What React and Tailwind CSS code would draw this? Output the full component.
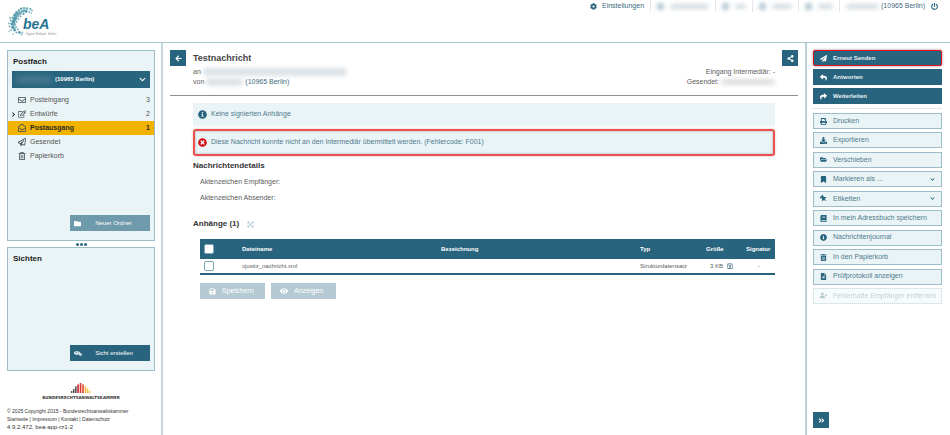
import { useState } from 'react';
import {
  FaCog, FaPowerOff, FaRegEnvelope, FaRegEdit, FaRegEnvelopeOpen, FaRegPaperPlane, FaRegTrashAlt,
  FaFolder, FaFolderOpen, FaEye, FaArrowLeft, FaShareAlt, FaInfoCircle, FaTimesCircle, FaRegSave,
  FaSave, FaPaperPlane, FaReply, FaShare, FaPrint, FaDownload, FaBookmark, FaThumbtack, FaBook,
  FaTrashAlt, FaFileAlt, FaUserTimes, FaAngleDoubleRight, FaChevronDown, FaChevronRight,
  FaExpandArrowsAlt,
} from 'react-icons/fa';

const folders = [
  { name: 'Posteingang', icon: FaRegEnvelope, count: 3 },
  { name: 'Entwürfe', icon: FaRegEdit, count: 2, expandable: true },
  { name: 'Postausgang', icon: FaRegEnvelopeOpen, count: 1 },
  { name: 'Gesendet', icon: FaRegPaperPlane },
  { name: 'Papierkorb', icon: FaRegTrashAlt },
];

const mainActions = [
  { label: 'Erneut Senden', icon: FaPaperPlane, marked: true },
  { label: 'Antworten', icon: FaReply },
  { label: 'Weiterleiten', icon: FaShare },
];

const actions = [
  { label: 'Drucken', icon: FaPrint },
  { label: 'Exportieren', icon: FaDownload },
  { label: 'Verschieben', icon: FaFolderOpen },
  { label: 'Markieren als ...', icon: FaBookmark, menu: true },
  { label: 'Etiketten', icon: FaThumbtack, menu: true, tilted: true },
  { label: 'In mein Adressbuch speichern', icon: FaBook },
  { label: 'Nachrichtenjournal', icon: FaInfoCircle },
  { label: 'In den Papierkorb', icon: FaTrashAlt },
  { label: 'Prüfprotokoll anzeigen', icon: FaFileAlt },
  { label: 'Fehlerhafte Empfänger entfernen', icon: FaUserTimes, disabled: true },
];

// widths of the redacted entries in the top bar
const hiddenLinks = ['w-[39px]', 'w-[11px]', 'w-[20px]', 'w-[15px]'];

// dots of the swirl, [x, y, radius]
const dots = [
  [14, 1.6, 1.1], [17, 1.2, 1.3], [20, 1.6, 1.3], [23.4, 2, 1], [12, 3.6, 1.4], [15.5, 4, 1.6], [19, 4.2, 1.5],
  [22.4, 5, 1], [24.4, 6.2, 0.8], [9.5, 5.6, 1.4], [12.8, 6.8, 1.7], [16.4, 6.8, 1.2], [7.6, 8, 1.4], [10.4, 9, 1.6],
  [13.6, 9.6, 1], [25, 3.6, 0.8], [3, 11, 0.9], [5.8, 10.8, 1.3], [8.4, 11.8, 1.5], [11.4, 12, 1],
  [3.8, 13.6, 1.1], [6.6, 14.4, 1.5], [9.6, 14.8, 1], [2, 16.4, 0.9], [4.8, 17, 1.4], [7.8, 17.6, 1.3],
  [2.6, 19.6, 1], [5.8, 20.2, 1.5], [9, 20.2, 1], [4.2, 23.2, 0.9], [7.6, 23, 1.4], [10.8, 22.6, 1],
  [9.4, 25.6, 1], [12.4, 25.4, 1.3], [15.4, 25.4, 0.9], [14.6, 27.4, 0.9], [6, 27, 0.7], [2.2, 24.2, 0.7],
];

function Logo() {
  return (
    <svg className="h-[29px] w-[50px]" viewBox="0 0 50 29" role="img" aria-label="beA Digital. Einfach. Sicher.">
      <path d="M13 5C7 9 4 15 7 22M18 3C11 6 8 10 7 17" fill="none" stroke="#6ba6b6" strokeWidth="1.6" />
      {dots.map(([x, y, r], i) => (
        <circle key={i} cx={x} cy={y} r={r} fill={i % 3 === 0 ? '#4f98ab' : '#74adbb'} />
      ))}
      <text x="16" y="22" fontSize="14" fontWeight="bold" fontStyle="italic" fontFamily="Liberation Sans, Arial, sans-serif" fill="#23738f">beA</text>
      <text x="19" y="28" fontSize="3" fontStyle="italic" fontFamily="Liberation Sans, Arial, sans-serif" fill="#7f8f96">Digital. Einfach. Sicher.</text>
    </svg>
  );
}

function ChamberLogo() {
  return (
    <svg className="h-[10px] w-[20px]" viewBox="0 0 20 10" aria-hidden="true">
      <rect x="0" y="8" width="1.4" height="2" fill="#555" />
      <rect x="2" y="6" width="1.4" height="4" fill="#444" />
      <rect x="4" y="3.4" width="1.6" height="6.6" fill="#555" />
      <rect x="6.2" y="1.4" width="1.7" height="8.6" fill="#c8343a" />
      <rect x="8.7" y="0" width="1.7" height="10" fill="#dc3c38" />
      <rect x="11.2" y="1.4" width="1.7" height="8.6" fill="#e2553c" />
      <rect x="13.7" y="3.4" width="1.6" height="6.6" fill="#f2b63c" />
      <rect x="16" y="5.4" width="1.4" height="4.6" fill="#f4c64a" />
      <rect x="18.2" y="8" width="1.4" height="2" fill="#f4c64a" />
    </svg>
  );
}

function Blurred({ className }) {
  return <span className={`inline-block rounded-sm blur-[2px] ${className}`} />;
}

function TopBar() {
  return (
    <header className="flex h-[43px] shrink-0 items-start justify-between border-b border-[#a9c5d1] pl-[7px] pr-3">
      <div className="pt-[7px]">
        <Logo />
      </div>
      <nav className="flex h-3 items-center text-[7px] text-[#3d6b80]">
        <a href="#" className="flex items-center gap-[5px] pr-[6px]">
          <FaCog className="size-[7px] text-[#28647e]" />
          Einstellungen
        </a>
        {hiddenLinks.map((width) => (
          <a key={width} href="#" className="flex h-3 items-center gap-[6px] border-l border-gray-200 px-[6px]">
            <Blurred className="size-[7px] bg-[#a9c2cd]" />
            <Blurred className={`h-[5px] bg-[#d3dde2] ${width}`} />
          </a>
        ))}
        <span className="flex h-3 items-center gap-[2px] border-l border-gray-200 pl-[6px]">
          <Blurred className="h-[5px] w-[33px] bg-[#d3dde2]" />
          (10965 Berlin)
        </span>
        <button aria-label="Abmelden" className="pl-[6px] text-[#28647e]">
          <FaPowerOff className="size-[7px]" />
        </button>
      </nav>
    </header>
  );
}

function Sidebar() {
  const [selected, setSelected] = useState('Postausgang');

  return (
    <aside className="flex w-[163px] shrink-0 flex-col border-r-2 border-[#c3d8e0] pl-[7px] pr-[6px] pt-[7px]">
      {/* Folders */}
      <section className="flex min-h-[191px] flex-col border border-[#9dbdc9] bg-[#eaf4f7]">
        <h2 className="px-[5px] pt-[5px] text-[8px] leading-3 font-bold">Postfach</h2>
        <div className="relative mx-1 mt-[3px]">
          <select
            aria-label="Postfach"
            className="block h-[17px] w-full appearance-none bg-[#28647e] pl-[43px] text-[6px] font-bold text-white"
          >
            <option>(10965 Berlin)</option>
          </select>
          <span className="pointer-events-none absolute top-[5px] left-1 h-[7px] w-[35px] bg-[#4b7d91] blur-[3px]" />
          <FaChevronDown className="pointer-events-none absolute top-[5px] right-1 size-[7px] text-white" />
        </div>

        <ul className="mt-[5px] text-[7px] text-[#555]">
          {folders.map(({ name, icon: Icon, count, expandable }) => (
            <li key={name}>
              <button
                onClick={() => setSelected(name)}
                className={`flex h-[14px] w-full items-center pr-1 ${selected === name ? 'bg-[#f2b200] font-bold text-[#2a2a20]' : ''}`}
              >
                <span className="flex w-[10px] justify-center">
                  {expandable && <FaChevronRight className="size-[5px] text-black" />}
                </span>
                <Icon className="mr-1 size-[8px] text-[#3a4a52]" />
                {name}
                <span className="ml-auto">{count}</span>
              </button>
            </li>
          ))}
        </ul>

        <button className="mt-auto mr-1 mb-[9px] flex h-4 w-[80px] items-center self-end bg-[#6e9aab] text-[6px] text-white">
          <FaFolder className="ml-1 size-[7px] text-white" />
          <span className="flex-1 pr-1 text-center">Neuer Ordner</span>
        </button>
      </section>

      <div className="flex h-[6px] items-center justify-center gap-px">
        <span className="size-[3px] rounded-full bg-[#28647e]" />
        <span className="size-[3px] rounded-full bg-[#28647e]" />
        <span className="size-[3px] rounded-full bg-[#28647e]" />
      </div>

      {/* Views */}
      <section className="flex min-h-[124px] flex-col border border-[#9dbdc9] bg-[#eaf4f7]">
        <h2 className="px-[5px] pt-[5px] text-[8px] leading-3 font-bold">Sichten</h2>
        <button className="mt-auto mr-1 mb-[9px] flex h-4 w-[80px] items-center self-end bg-[#28647e] text-[6px] text-white">
          <span className="ml-1 flex items-end">
            <FaEye className="size-[6px]" />
            <FaCog className="-ml-px size-[3px]" />
          </span>
          <span className="flex-1 pr-1 text-center">Sicht erstellen</span>
        </button>
      </section>

      <footer className="pt-3 text-[5px] leading-[8px] text-[#333]">
        <div className="flex flex-col items-center gap-[2px]">
          <ChamberLogo />
          <p className="font-['DejaVu_Sans',sans-serif] text-[4px] leading-[6px] font-bold">BUNDESRECHTSANWALTSKAMMER</p>
        </div>
        <p className="mt-[6px]">© 2025 Copyright 2015 - Bundesrechtsanwaltskammer</p>
        <p>
          <a href="#">Startseite</a> | <a href="#">Impressum</a> | <a href="#">Kontakt</a> | <a href="#">Datenschutz</a>
        </p>
        <p className="text-[6px] leading-[8px]">4.9.2.472, bea-app-rz1-2</p>
      </footer>
    </aside>
  );
}

function Attachments() {
  const [checked, setChecked] = useState(false);
  const box = 'block size-[10px] appearance-none rounded-[2px] border border-[#7fa6b5] bg-white checked:bg-[#a9c5d1]';

  return (
    <section className="pt-3">
      <h3 className="flex items-center gap-2 text-[8px] leading-3 font-bold text-[#333]">
        Anhänge (1)
        <FaExpandArrowsAlt className="size-[7px] text-[#a9cbd6]" />
      </h3>
      <div className="pl-[7px]">
        <table className="mt-[9px] w-full table-fixed border-b-2 border-[#28647e] text-left text-[6px]">
          <colgroup>
            <col className="w-[42px]" />
            <col />
            <col />
            <col className="w-[66px]" />
            <col className="w-[40px]" />
            <col className="w-[29px]" />
          </colgroup>
          <thead className="bg-[#28647e] text-white">
            <tr className="h-5">
              <th className="pl-1">
                <input type="checkbox" aria-label="Alle auswählen" className={box} checked={checked} onChange={() => setChecked(!checked)} />
              </th>
              <th>Dateiname</th>
              <th>Bezeichnung</th>
              <th>Typ</th>
              <th>Größe</th>
              <th>Signatur</th>
            </tr>
          </thead>
          <tbody>
            <tr className="h-[15px]">
              <td className="pl-1">
                <input type="checkbox" aria-label="xjustiz_nachricht.xml" className={box} checked={checked} onChange={() => setChecked(!checked)} />
              </td>
              <td>xjustiz_nachricht.xml</td>
              <td />
              <td>Strukturdatensatz</td>
              <td>
                <span className="flex items-center gap-1 pl-1">
                  3 KB
                  <FaRegSave className="size-[6px] text-[#3d6b80]" />
                </span>
              </td>
              <td className="pl-3">-</td>
            </tr>
          </tbody>
        </table>
        <div className="mt-2 flex gap-[6px] text-[7px] text-white">
          <button disabled className="flex h-4 w-[65px] items-center gap-[6px] bg-[#b5cad3] pl-[9px]">
            <FaSave className="size-[7px]" />
            Speichern
          </button>
          <button disabled className="flex h-4 w-[65px] items-center gap-[6px] bg-[#b5cad3] pl-[9px]">
            <FaEye className="size-[8px]" />
            Anzeigen
          </button>
        </div>
      </div>
    </section>
  );
}

function Message() {
  return (
    <main className="min-w-0 flex-1 px-[7px] pt-[7px] text-[7px] text-[#5c5c5c]">
      <div className="flex items-start border-b border-[#8f8f8f] pb-2">
        <button aria-label="Zurück" className="flex size-4 items-center justify-center bg-[#28647e] text-white">
          <FaArrowLeft className="size-[7px]" />
        </button>
        <div className="ml-[7px] leading-[10px]">
          <h1 className="text-[9px] leading-4 font-bold text-[#444]">Testnachricht</h1>
          <p className="mt-px flex items-center gap-[2px]">
            an <Blurred className="h-[8px] w-[144px] bg-[#dde3e6]" />
          </p>
          <p className="flex items-center gap-[2px]">
            von <Blurred className="h-[8px] w-[37px] bg-[#dde3e6]" />
            <span className="text-[#3d6b80]">(10965 Berlin)</span>
          </p>
        </div>
        <div className="mt-[17px] ml-auto mr-[7px] text-right leading-[10px]">
          <p>Eingang Intermediär: -</p>
          <p className="flex items-center justify-end gap-[2px]">
            Gesendet: <Blurred className="h-[6px] w-[54px] bg-[#dedede]" />
          </p>
        </div>
        <button aria-label="Teilen" className="flex size-4 items-center justify-center bg-[#28647e] text-white">
          <FaShareAlt className="size-[7px]" />
        </button>
      </div>

      <div className="pt-[7px] pr-[23px] pl-[23px]">
        <p className="flex h-[23px] items-center gap-[4px] bg-[#eaf4f7] pl-[5px] text-[#4f7a8d]">
          <FaInfoCircle className="size-[9px] text-[#28647e]" />
          Keine signierten Anhänge
        </p>
        <p className="mt-[3px] flex h-[27px] items-center gap-[4px] rounded-[3px] border-2 border-[#ec4f4c] bg-[#eaf4f7] pl-[3px] text-[#4f7a8d] shadow-[0_0_3px_rgba(120,60,60,0.3),inset_0_0_3px_rgba(90,90,90,0.4)]">
          <FaTimesCircle className="size-[9px] text-[#d60a14]" />
          Diese Nachricht konnte nicht an den Intermediär übermittelt werden. (Fehlercode: F001)
        </p>

        <h3 className="mt-1 text-[8px] leading-3 font-bold text-[#333]">Nachrichtendetails</h3>
        <p className="mt-[2px] pl-[7px] leading-4">Aktenzeichen Empfänger:</p>
        <p className="pl-[7px] leading-4">Aktenzeichen Absender:</p>

        <Attachments />
      </div>
    </main>
  );
}

function ActionButton({ label, icon: Icon, menu, disabled, tilted }) {
  return (
    <button
      disabled={disabled}
      className={`flex h-4 w-full items-center border border-[#9dbdc9] bg-[#eaf4f7] pr-[6px] pl-[6px] text-[7px] whitespace-nowrap text-[#4f7a8d] ${disabled ? 'opacity-35' : ''}`}
    >
      <Icon className={`mr-[6px] size-[7px] shrink-0 text-[#28647e] ${tilted ? '-rotate-45' : ''}`} />
      {label}
      {menu && <FaChevronDown className="ml-auto size-[5px] text-[#28647e]" />}
    </button>
  );
}

function ActionPanel() {
  return (
    <aside className="flex w-[145px] shrink-0 flex-col border-l-2 border-[#b9d0da] pr-[8px] pb-[7px] pl-[6px] pt-[7px]">
      <div className="flex flex-col gap-[3px]">
        {mainActions.map(({ label, icon: Icon, marked }) => (
          <button
            key={label}
            className={`flex h-4 items-center border bg-[#28647e] pl-[6px] text-[6px] font-bold text-[#e8f1f4] ${marked ? 'rounded-[2px] border-[#e0101c] shadow-[0_0_3px_rgba(120,60,60,0.6)]' : 'border-[#28647e]'}`}
          >
            <Icon className="mr-[6px] size-[7px] text-white" />
            {label}
          </button>
        ))}
      </div>
      <hr className="my-1 border-gray-200" />
      <div className="flex min-h-[191px] flex-col justify-between">
        {actions.map((action) => (
          <ActionButton key={action.label} {...action} />
        ))}
      </div>
      <button aria-label="Leiste einklappen" className="mt-auto flex size-4 items-center justify-center bg-[#28647e] text-white">
        <FaAngleDoubleRight className="size-[7px]" />
      </button>
    </aside>
  );
}

export default function App() {
  return (
    <div className="flex min-h-screen flex-col bg-white font-['Liberation_Sans',Arial,sans-serif] text-[#1c1c1c]">
      <TopBar />
      <div className="flex flex-1">
        <Sidebar />
        <Message />
        <ActionPanel />
      </div>
    </div>
  );
}
